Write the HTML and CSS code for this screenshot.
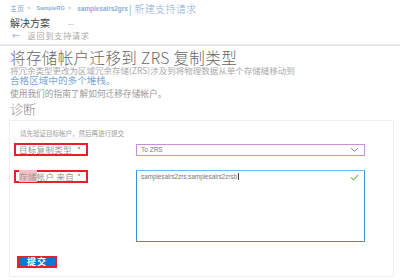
FILE: index.html
```html
<!DOCTYPE html>
<html lang="zh-CN">
<head>
<meta charset="utf-8">
<link rel="stylesheet" href="styles.css">
</head>
<body>
<div class="top">
  <div class="crumbs">
    <span class="link home">主页</span><span class="sep">&gt;</span><span class="link sm rg">SampleRG</span><span class="sep">&gt;</span><span class="link sm">samplesalrs2grs</span><span class="bar">|</span><span class="crumb-title">新建支持请求</span>
  </div>
  <div class="blade-title"><span>解决方案</span><span class="dots">...</span></div>
  <div class="back"><span class="arrow">←</span> 返回到支持请求</div>
</div>
<div class="content">
  <h1 class="title">将存储帐户迁移到 ZRS 复制类型</h1>
  <p class="desc">将冗余类型更改为区域冗余存储(ZRS)涉及到将物理数据从单个存储缝移动到<br><span class="blue">合格区域中的多个堆栈。</span></p>
  <p class="guide">使用我们的指南了解如何迁移存储帐户。</p>
  <h2 class="sub">诊断</h2>
  <div class="panel">
    <div class="hint">请先验证目标帐户，然后再进行提交</div>
    <div class="row">
      <div class="label hl"><span>目标复制类型</span><span class="req">*</span></div>
      <div class="select"><span>To ZRS</span>
        <svg width="9" height="6" viewBox="0 0 9 6"><path d="M1 1l3.5 3.5L8 1" fill="none" stroke="#888" stroke-width="1"/></svg>
      </div>
    </div>
    <div class="row row2">
      <div class="label hl"><span><span class="pink">存储</span>帐户 来自</span><span class="req">*</span></div>
      <div class="textarea"><span class="val">samplesalrs2zrs;samplesalrs2zrsb</span>
        <svg class="check" width="9" height="7" viewBox="0 0 9 7"><path d="M1 3.5l2.5 2.5L8 1" fill="none" stroke="#8cc36a" stroke-width="1.2"/></svg>
      </div>
    </div>
    <div class="actions"><button class="submit">提交</button></div>
  </div>
</div>
</body>
</html>
```
FILE: styles.css
```css
* { box-sizing: border-box; margin: 0; padding: 0; }
body {
  width: 400px; height: 280px; overflow: hidden; background: #fff;
  font-family: "Noto Sans CJK SC", "Noto Sans", sans-serif; color: #888;
}
.top { padding: 1px 10px 0; border-bottom: 2px solid #e6e6e6; height: 46px; }
.crumbs { display: flex; align-items: center; height: 14px; white-space: nowrap; }
.link { color: #7aa7d8; }
.home { font-size: 7px; }
.sm { font-size: 6.4px; font-family: "Liberation Sans", sans-serif; font-weight: 700; color: #8aafd8; }
.rg { font-size: 5.6px; }
.sep { color: #aaa; font-size: 6px; margin: 0 6px 0 3px; font-family: "Liberation Sans", sans-serif; }
.bar { color: #7aa7d8; font-size: 10px; margin: 0 3px 0 1px; }
.crumb-title { color: #8fb0d6; font-size: 10px; font-weight: 300; letter-spacing: 0.3px; }
.blade-title { display: flex; align-items: center; height: 14px; font-size: 10px; color: #444; }
.dots { font-size: 7px; color: #999; margin-left: 18px; }
.back { font-size: 8px; color: #aaa; height: 14px; line-height: 14px; letter-spacing: 0.9px; }
.arrow { color: #6f9fd6; margin-left: 2px; margin-right: 4px; }
.content { padding: 2px 6px 0 10px; }
.title { font-weight: 300; font-size: 15.5px; color: #666; line-height: 18px; letter-spacing: 0.4px; }
.desc { font-size: 8.5px; color: #aaa; line-height: 9.5px; margin-top: 0; white-space: nowrap; }
.blue { color: #7aa7d8; font-size: 9.6px; }
.guide { font-size: 8.7px; color: #999; line-height: 10px; margin-top: 3.5px; }
.sub { font-weight: 300; font-size: 13px; color: #888; line-height: 16px; margin-top: 2px; }
.panel { margin-top: 3px; margin-left: -1px; border: 1px solid #eee; border-radius: 1px; height: 157px; padding: 8px 4px 0 4px; }
.hint { font-size: 6.5px; color: #999; margin-left: 6px; height: 14px; line-height: 9px; }
.row { display: flex; align-items: flex-end; }
.row2 { align-items: flex-start; margin-top: 14px; }
.label { width: 74px; height: 13px; font-size: 8.5px; color: #999; line-height: 9px; padding: 0 5px 0 3px; letter-spacing: 0.3px; white-space: nowrap; display: flex; justify-content: space-between; align-items: center; }
.hl { border: 2px solid #e8202a; }
.req { color: #d04040; font-size: 7px; }
.pink { background: #f7c0c4; }
.select { margin-left: 48px; width: 229px; height: 12px; border: 1px solid #c890dc; display: flex; align-items: center; justify-content: space-between; padding: 0 5px 0 4px; font-size: 6.5px; color: #777; font-family: "Liberation Sans", sans-serif; }
.textarea { margin-left: 48px; width: 229px; height: 72px; border: 1px solid #3d8fe0; border-top-color: #7ab6ec; position: relative; padding: 2px 4px; font-size: 6.3px; color: #777; font-family: "Liberation Sans", sans-serif; }
.val { border-right: 1px solid #444; padding-right: 1px; }
.check { position: absolute; right: 5px; top: 3px; }
.actions { margin-top: 14px; }
.submit { display: block; width: 40px; height: 12px; margin-left: 3px; background: #0078d4; color: #fff; border: 2px solid #e8202a; font-size: 9px; font-family: "Noto Sans CJK SC", sans-serif; font-weight: 700; line-height: 8px; letter-spacing: 1px; }
```
